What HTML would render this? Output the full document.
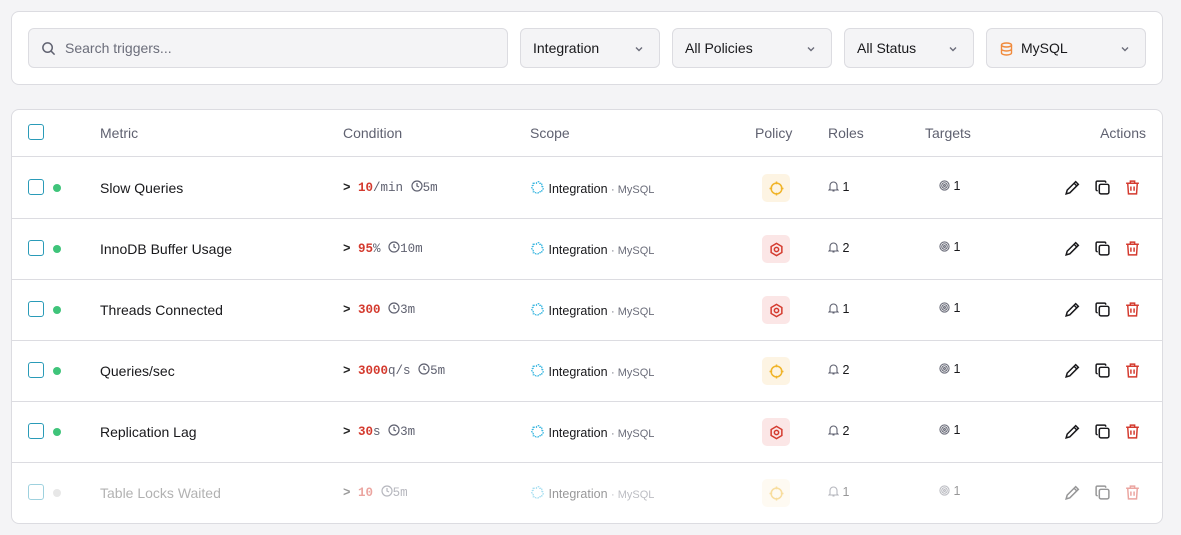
<!DOCTYPE html>
<html><head><meta charset="utf-8"><style>
*{box-sizing:border-box;margin:0;padding:0}
body{width:1181px;height:535px;background:#f4f4f6;font-family:"Liberation Sans",sans-serif;color:#18181b;position:relative;overflow:hidden}
.card{position:absolute;left:11px;width:1152px;background:#fff;border:1px solid #dcdce1;border-radius:8px}
.in{position:absolute;top:16px;height:40px;background:#f4f4f6;border:1px solid #dcdce1;border-radius:6px;font-size:14px;display:flex;align-items:center;padding-left:12px}
.chev{position:absolute;right:14px;top:14px}
.hdr{position:absolute;top:0;left:0;right:0;height:47px;border-bottom:1px solid #dcdce1;font-size:14px;color:#5f6170}
.hdr span,.row span,.row div{position:absolute}
.row{position:absolute;left:0;right:0;height:61px;border-bottom:1px solid #dcdce1;font-size:14px}
.row:last-child{border-bottom:none}
.cb{position:absolute;left:16px;width:16px;height:16px;border:1.5px solid #2a9bb8;border-radius:3px}
.dot{left:41px;top:26px;width:8px;height:8px;border-radius:50%;background:#3fc47a}
.mono{font-family:"Liberation Mono",monospace;font-size:12.5px;color:#5f6170}
.red{color:#d43a2e;font-weight:bold}
.badge{left:750px;top:16px;width:28px;height:28px;border-radius:5px;display:flex;align-items:center;justify-content:center}
.sm{font-size:12.5px}
</style></head><body>
<div class="card" style="top:11px;height:74px">
 <div class="in" style="left:16px;width:480px;color:#6b6d7a;padding-left:36px">
  <svg style="position:absolute;left:12px;top:12px" width="15" height="15" viewBox="0 0 16 16" fill="none" stroke="#5f6170" stroke-width="1.6"><circle cx="7" cy="7" r="5"/><path d="M11 11l3.5 3.5"/></svg>Search triggers...</div>
 <div class="in" style="left:508px;width:140px">Integration<svg class="chev" width="12" height="12" viewBox="0 0 12 12" fill="none" stroke="#6b6d7a" stroke-width="1.4"><path d="M3 4.5l3 3 3-3"/></svg></div>
 <div class="in" style="left:660px;width:160px">All Policies<svg class="chev" width="12" height="12" viewBox="0 0 12 12" fill="none" stroke="#6b6d7a" stroke-width="1.4"><path d="M3 4.5l3 3 3-3"/></svg></div>
 <div class="in" style="left:832px;width:130px">All Status<svg class="chev" width="12" height="12" viewBox="0 0 12 12" fill="none" stroke="#6b6d7a" stroke-width="1.4"><path d="M3 4.5l3 3 3-3"/></svg></div>
 <div class="in" style="left:974px;width:160px;padding-left:34px"><svg style="position:absolute;left:13px;top:13px" width="13" height="14" viewBox="0 0 13 14" fill="none" stroke="#f08a3c" stroke-width="1.4"><ellipse cx="6.5" cy="3" rx="5" ry="2"/><path d="M1.5 3v8c0 1.1 2.2 2 5 2s5-.9 5-2V3M1.5 7c0 1.1 2.2 2 5 2s5-.9 5-2"/></svg>MySQL<svg class="chev" width="12" height="12" viewBox="0 0 12 12" fill="none" stroke="#6b6d7a" stroke-width="1.4"><path d="M3 4.5l3 3 3-3"/></svg></div>
</div>
<div class="card" style="top:109px;height:415px">
 <div class="hdr"><div class="cb" style="top:14px"></div><span style="left:88px;top:15px">Metric</span><span style="left:331px;top:15px">Condition</span><span style="left:518px;top:15px">Scope</span><span style="left:743px;top:15px">Policy</span><span style="left:816px;top:15px">Roles</span><span style="left:913px;top:15px">Targets</span><span style="right:16px;top:15px">Actions</span></div>
 <div id="rows" style="position:absolute;top:48px;left:0;right:0;bottom:0"></div>
</div>
<script>
var d=[["Slow Queries","10","/min","5m",0,1],["InnoDB Buffer Usage","95","%","10m",1,2],["Threads Connected","300","","3m",1,1],["Queries/sec","3000","q/s","5m",0,2],["Replication Lag","30","s","3m",1,2],["Table Locks Waited","10","","5m",0,1]];
var h="";
d.forEach(function(r,i){
var pol=r[4]?'<div class="badge" style="background:#fbe6e6"><svg width="15" height="15" viewBox="0 0 14 14" fill="none" stroke="#d43a2e" stroke-width="1.4"><path d="M7 1.3l5 2.9v5.6L7 12.7 2 9.8V4.2z"/><circle cx="7" cy="7" r="2"/></svg></div>':'<div class="badge" style="background:#fdf4e3"><svg width="15" height="15" viewBox="0 0 14 14" fill="none" stroke="#f0b429" stroke-width="1.4"><circle cx="7" cy="7" r="5"/><path d="M7 0.5v2.5M7 11v2.5M0.5 7h2.5M11 7h2.5"/></svg></div>';
var last=i==5;
h+='<div class="row" style="top:'+(i*61)+'px;'+(last?'opacity:.45':'')+'">'+
'<div class="cb" style="top:21px"></div><div class="dot" style="'+(last?'background:#ccc':'')+'"></div>'+
'<span style="left:88px;top:22px;'+(last?'color:#555':'')+'">'+r[0]+'</span>'+
'<span class="mono" style="left:331px;top:22px"><b style="color:#222">&gt;</b> <span class="red" style="position:static">'+r[1]+'</span>'+r[2]+' <svg width="12" height="12" viewBox="0 0 12 12" fill="none" stroke="#5f6170" stroke-width="1.2" style="vertical-align:-1px"><circle cx="6" cy="6" r="5"/><path d="M6 3v3l2 1"/></svg>'+r[3]+'</span>'+
'<span style="left:518px;top:22px;font-size:12.5px"><svg width="15" height="15" viewBox="0 0 14 14" fill="none" stroke="#38b6e0" stroke-width="1.2" stroke-dasharray="1.5 1" style="vertical-align:-2px"><path d="M3 3h3a1.5 1.5 0 013 0h2v3a1.5 1.5 0 010 3v2H8a1.5 1.5 0 01-3 0H3V8a1.5 1.5 0 010-3z"/></svg> Integration <span style="position:static;color:#6b6d7a;font-size:11px">· MySQL</span></span>'+
pol+
'<span class="sm" style="left:816px;top:22px"><svg width="11" height="12" viewBox="0 0 11 12" fill="none" stroke="#5f6170" stroke-width="1.1" style="vertical-align:-1px"><path d="M2 9V5.5a3.5 3.5 0 017 0V9l1 1H1zM4.5 11h2"/></svg> '+r[5]+'</span>'+
'<span class="sm" style="left:927px;top:21px"><svg width="11" height="11" viewBox="0 0 12 12" fill="none" stroke="#6b6d7a" stroke-width="1.2" style="vertical-align:-1px"><circle cx="6" cy="6" r="5"/><circle cx="6" cy="6" r="3"/><circle cx="6" cy="6" r="1"/></svg> 1</span>'+
'<svg style="position:absolute;left:1052px;top:21px" width="17" height="17" viewBox="0 0 16 16" fill="none" stroke="#18181b" stroke-width="1.4"><path d="M2 14l1-3.5L11 2.5l2.5 2.5-8 8zM9.5 4l2.5 2.5"/></svg>'+
'<svg style="position:absolute;left:1082px;top:21px" width="17" height="17" viewBox="0 0 16 16" fill="none" stroke="#18181b" stroke-width="1.4"><rect x="5" y="5" width="9" height="9" rx="1.5"/><path d="M3.5 11H3a1 1 0 01-1-1V3a1 1 0 011-1h7a1 1 0 011 1v.5"/></svg>'+
'<svg style="position:absolute;left:1112px;top:21px" width="17" height="17" viewBox="0 0 16 16" fill="none" stroke="#d43a2e" stroke-width="1.4"><path d="M2 4h12M6 4V2h4v2M3.5 4l.7 10h7.6l.7-10M6.5 7v4M9.5 7v4"/></svg>'+
'</div>';});
document.getElementById("rows").innerHTML=h;
</script>
</body></html>
